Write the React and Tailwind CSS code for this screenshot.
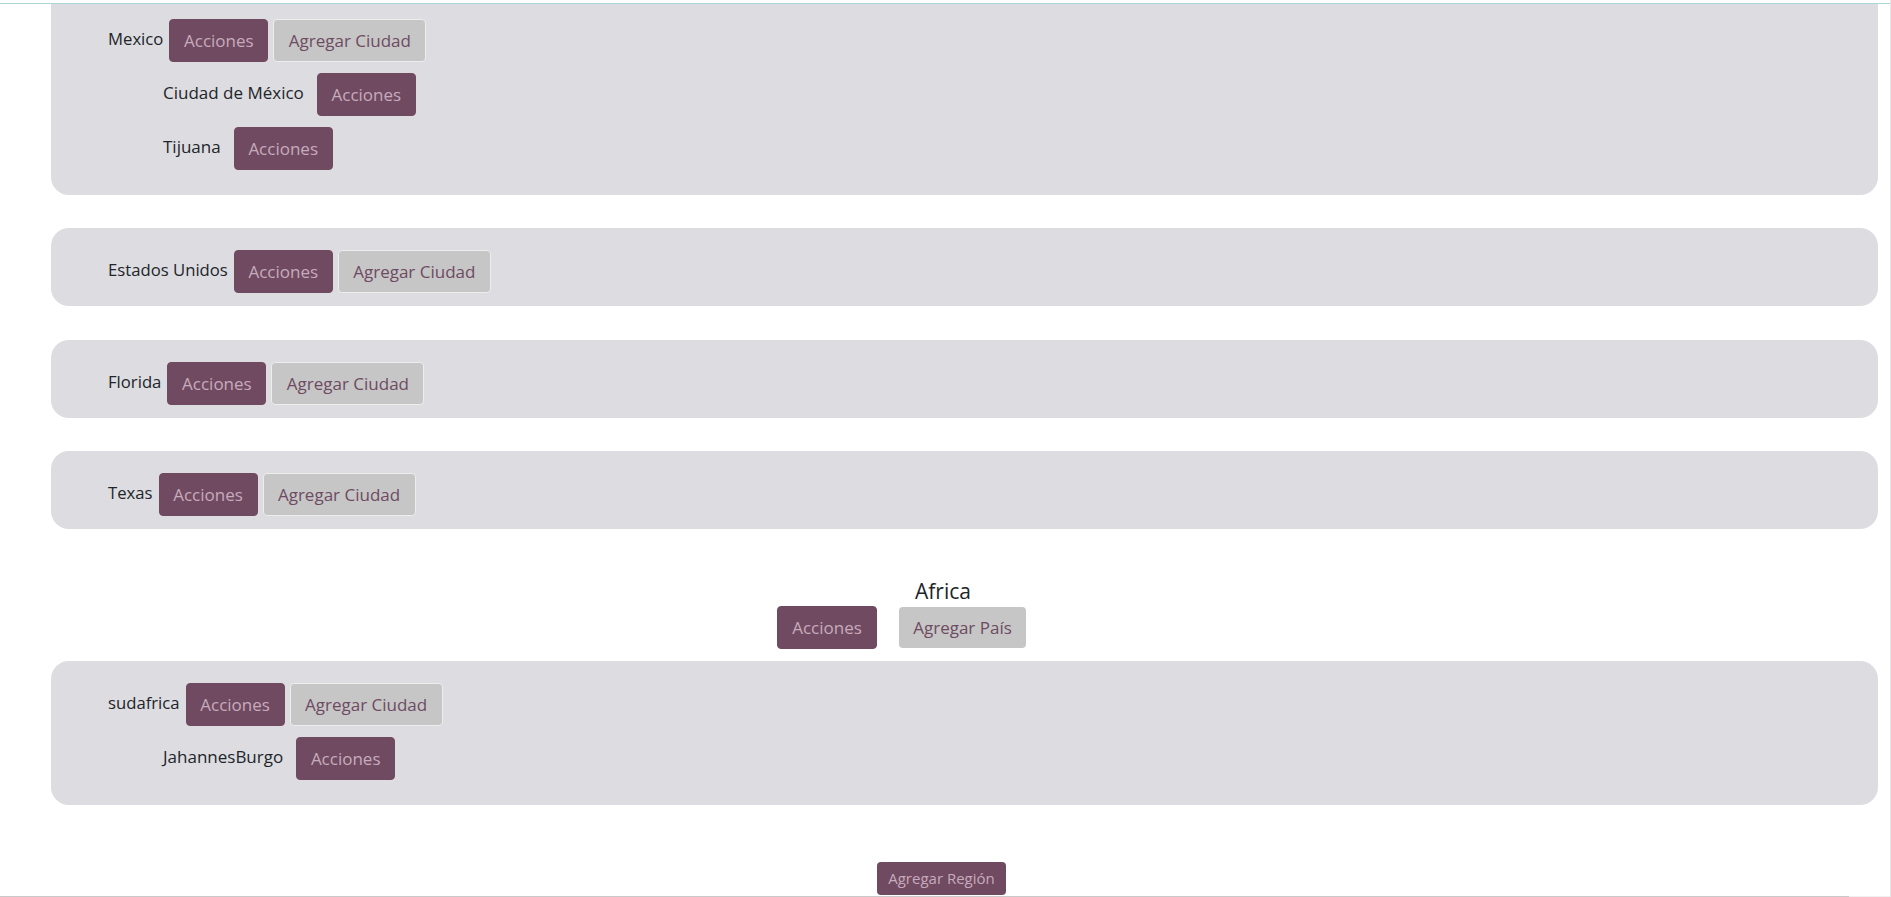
import React from 'react'

const regiones = [
  {
    paises: [
      { nombre: 'Mexico', ciudades: ['Ciudad de México', 'Tijuana'] },
      { nombre: 'Estados Unidos', ciudades: [] },
      { nombre: 'Florida', ciudades: [] },
      { nombre: 'Texas', ciudades: [] },
    ],
  },
  {
    nombre: 'Africa',
    paises: [{ nombre: 'sudafrica', ciudades: ['JahannesBurgo'] }],
  },
]

const font = { fontFamily: '"Open Sans", "Noto Sans", sans-serif' }

function Acciones({ className = '' }) {
  return (
    <button
      className={`h-[43px] w-[99px] shrink-0 rounded-[4px] border border-[#704a60] bg-[#704a60] text-[17px] text-[#c7abbd] ${className}`}
    >
      Acciones
    </button>
  )
}

function AgregarCiudad() {
  return (
    <button className="ml-[5px] h-[43px] w-[153px] shrink-0 rounded-[4px] border border-[#ededed] bg-[#c6c6c6] text-[17px] text-[#6e4b62]">
      Agregar Ciudad
    </button>
  )
}

function PaisCard({ pais, first }) {
  const tieneCiudades = pais.ciudades.length > 0
  return (
    <div
      className={`mr-[12px] ml-[51px] bg-[#dddce1] pl-[57px] ${
        first ? 'rounded-b-[18px] pt-[15px]' : 'rounded-[18px] pt-[22px]'
      } ${tieneCiudades ? 'pb-[25px]' : 'pb-[13px]'}`}
    >
      <div className="flex items-center">
        <span className="-mt-[3px] mr-[6px] text-[16.7px] text-[#212529]">{pais.nombre}</span>
        <Acciones />
        <AgregarCiudad />
      </div>
      {pais.ciudades.map((ciudad) => (
        <div key={ciudad} className="mt-[11px] flex items-center pl-[55px]">
          <span className="-mt-[3px] mr-[13px] text-[17px] text-[#212529]">{ciudad}</span>
          <Acciones />
        </div>
      ))}
    </div>
  )
}

export default function App() {
  const [america, africa] = regiones

  return (
    <div style={font} className="h-[897px] overflow-hidden border-r border-[#e6e6e6] bg-white">
      <div className="mt-[3px] border-t border-[#aad6da]">
        <PaisCard pais={america.paises[0]} first />
        <div className="mt-[33px]">
          <PaisCard pais={america.paises[1]} />
        </div>
        <div className="mt-[34px]">
          <PaisCard pais={america.paises[2]} />
        </div>
        <div className="mt-[33px]">
          <PaisCard pais={america.paises[3]} />
        </div>

        <div className="mt-[50px] flex flex-col items-center pr-[4px]">
          <h5 className="h-[25px] text-[21px] leading-[25px] text-[#212529]">{africa.nombre}</h5>
        </div>
        <div className="mt-[2px] flex justify-center pr-[87px]">
          <Acciones className="w-[100px]" />
          <button className="ml-[22px] mt-px h-[41px] w-[127px] rounded-[4px] bg-[#c6c6c6] text-[17px] text-[#6e4b62]">
            Agregar País
          </button>
        </div>

        <div className="mt-[12px]">
          <PaisCard pais={africa.paises[0]} />
        </div>

        <div className="mt-[57px] flex justify-center pr-[7px]">
          <button className="h-[33px] w-[129px] rounded-[4px] bg-[#704a60] text-[15px] text-[#c7abbd]">
            Agregar Región
          </button>
        </div>
        <div className="mt-[1px] flex h-[3px] bg-[#f0f0f0]">
          <div className="h-[2px] w-[1849px] bg-[#c9c9c9]" />
        </div>
      </div>
    </div>
  )
}
